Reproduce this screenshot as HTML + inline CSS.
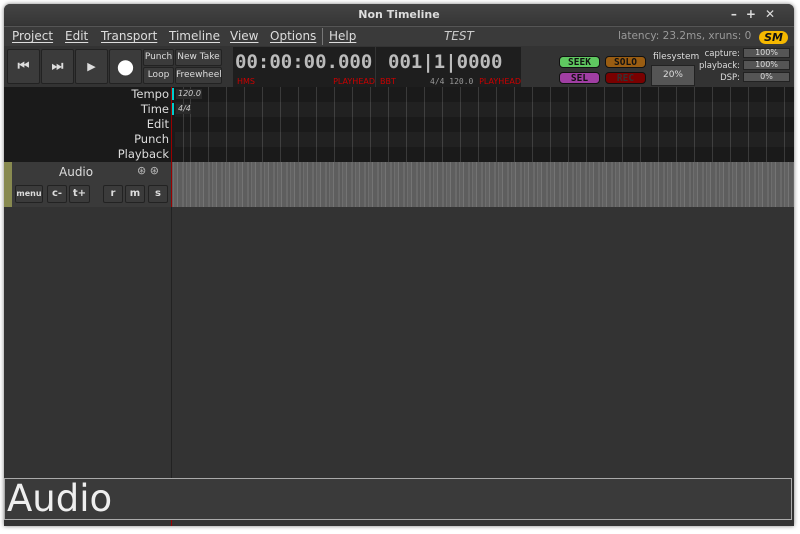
<!DOCTYPE html>
<html><head><style>
*{margin:0;padding:0;box-sizing:border-box}
body{width:800px;height:534px;background:#fff;font-family:"DejaVu Sans","Liberation Sans",sans-serif;position:relative;overflow:hidden}
.win{position:absolute;left:4px;top:4px;width:790px;height:522px;background:#333;border-radius:6px 6px 0 0;box-shadow:0 0 4px rgba(0,0,0,.5);overflow:hidden}
.a{position:absolute;white-space:nowrap}
.title{left:0;top:0;width:790px;height:21px;background:linear-gradient(#444,#363636);color:#ddd;font-weight:bold;font-size:11px;text-align:center;line-height:21px}
.menu{left:0;top:22px;width:790px;height:20px;background:#3a3a3a;border-top:1px solid #555;color:#ddd;font-size:12px;line-height:19px}
.menu span{position:absolute;text-decoration:underline;text-decoration-thickness:1px;text-underline-offset:2px}
.btn{background:#3b3b3b;border:1px solid #222;border-radius:2px;color:#ddd;font-size:9px;text-align:center}
.clk{background:#1e1e1e;color:#bbb;font-family:"DejaVu Sans Mono",monospace}
.red{color:#c00;font-size:8px;font-family:"DejaVu Sans",sans-serif}
.pill{border:1px solid #111;border-radius:4px;font-weight:bold;font-size:9.5px;text-align:center;line-height:11px;font-family:"DejaVu Sans Mono",monospace}
.lbl{color:#ddd;font-size:11.5px;text-align:right;width:165px;left:0}
.grid{background-image:repeating-linear-gradient(90deg,#3a3a3a 0 1px,transparent 1px 18px)}
</style></head><body>
<div class="win">
<div class="a title">Non Timeline<span style="position:absolute;right:10px;top:0;letter-spacing:9px;font-size:12px">–+✕</span></div>
<div class="a menu">
<span style="left:8px">Project</span><span style="left:61px">Edit</span><span style="left:97px">Transport</span><span style="left:165px">Timeline</span><span style="left:226px">View</span><span style="left:266px">Options</span>
<div style="position:absolute;left:318px;top:1px;width:1px;height:17px;background:#777"></div>
<span style="left:325px">Help</span>
<span style="left:440px;text-decoration:none;font-style:italic;color:#ccc">TEST</span>
<span style="left:614px;text-decoration:none;color:#999;font-size:10.5px">latency: 23.2ms, xruns: 0</span>
<div style="position:absolute;left:755px;top:4px;width:29px;height:13px;background:#f5b800;border-radius:7px;color:#111;font-weight:bold;font-style:italic;font-size:11px;line-height:13px;text-align:center">SM</div>
</div>
<div class="a" style="left:0;top:43px;width:790px;height:43px;background:#333"></div>
<div class="a btn" style="left:3px;top:45px;width:33px;height:35px;font-size:13px;line-height:33px;font-weight:bold">⏮</div>
<div class="a btn" style="left:37px;top:45px;width:33px;height:35px;font-size:13px;line-height:33px;font-weight:bold">⏭</div>
<div class="a btn" style="left:71px;top:45px;width:33px;height:35px;font-size:11px;line-height:33px">▶</div>
<div class="a btn" style="left:105px;top:45px;width:33px;height:35px;font-size:20px;line-height:32px;color:#fff">●</div>
<div class="a btn" style="left:139px;top:45px;width:31px;height:17px;line-height:15px">Punch</div>
<div class="a btn" style="left:171px;top:45px;width:47px;height:17px;line-height:15px">New Take</div>
<div class="a btn" style="left:139px;top:63px;width:31px;height:17px;line-height:15px">Loop</div>
<div class="a btn" style="left:171px;top:63px;width:47px;height:17px;line-height:15px">Freewheel</div>
<div class="a clk" style="left:229px;top:43px;width:142px;height:40px"><div style="position:absolute;left:2px;top:4px;font-size:19px;font-weight:bold">00:00:00.000</div><div class="red" style="position:absolute;left:4px;top:30px">HMS</div><div class="red" style="position:absolute;right:0;top:30px">PLAYHEAD</div></div>
<div class="a clk" style="left:372px;top:43px;width:145px;height:40px"><div style="position:absolute;left:12px;top:4px;font-size:19px;font-weight:bold">001|1|0000</div><div class="red" style="position:absolute;left:4px;top:30px">BBT</div><div style="position:absolute;left:54px;top:30px;font-size:8px;color:#999">4/4 120.0</div><div class="red" style="position:absolute;right:0;top:30px">PLAYHEAD</div></div>
<div class="a pill" style="left:555px;top:52px;width:41px;height:12px;background:#5fc760;color:#111">SEEK</div>
<div class="a pill" style="left:601px;top:52px;width:41px;height:12px;background:#9a5d12;color:#111">SOLO</div>
<div class="a pill" style="left:555px;top:68px;width:41px;height:12px;background:#a03ea3;color:#111">SEL</div>
<div class="a pill" style="left:601px;top:68px;width:41px;height:12px;background:#7a0000;color:#333">REC</div>
<div class="a" style="left:649px;top:48px;color:#ddd;font-size:9px">filesystem</div>
<div class="a" style="left:647px;top:61px;width:44px;height:21px;background:#555;border:1px solid #222;color:#ddd;font-size:9px;text-align:center;line-height:19px">20%</div>
<div class="a" style="left:690px;top:44px;width:46px;color:#ddd;font-size:8.5px;text-align:right;line-height:12px">capture:<br>playback:<br>DSP:</div>
<div class="a" style="left:739px;top:44px;width:47px;height:10px;background:#555;border:1px solid #222;color:#ddd;font-size:8px;text-align:center;line-height:8px">100%</div>
<div class="a" style="left:739px;top:56px;width:47px;height:10px;background:#555;border:1px solid #222;color:#ddd;font-size:8px;text-align:center;line-height:8px">100%</div>
<div class="a" style="left:739px;top:68px;width:47px;height:10px;background:#555;border:1px solid #222;color:#ddd;font-size:8px;text-align:center;line-height:8px">0%</div>
<div class="a" style="left:0;top:83px;width:790px;height:75px;background:#1a1a1a"></div>
<div class="a grid" style="left:171px;top:83px;width:619px;height:75px;background-color:#1a1a1a;background-position:15px 0"></div>
<div class="a" style="left:171px;top:98px;width:619px;height:15px;background:rgba(255,255,255,.03)"></div>
<div class="a" style="left:171px;top:128px;width:619px;height:15px;background:rgba(255,255,255,.03)"></div>
<div class="a lbl" style="top:83px">Tempo</div>
<div class="a lbl" style="top:98px">Time</div>
<div class="a lbl" style="top:113px">Edit</div>
<div class="a lbl" style="top:128px">Punch</div>
<div class="a lbl" style="top:143px">Playback</div>
<div class="a" style="left:167px;top:84px;width:3px;height:12px;background:#0cc"></div>
<div class="a" style="left:167px;top:99px;width:3px;height:12px;background:#0cc"></div>
<div class="a" style="left:172px;top:85px;width:26px;height:10px;background:#2a2a2a;color:#ccc;font-size:8px;font-style:italic;line-height:10px;padding-left:2px">120.0</div>
<div class="a" style="left:172px;top:100px;width:15px;height:10px;background:#2a2a2a;color:#ccc;font-size:8px;font-style:italic;line-height:10px;padding-left:2px">4/4</div>
<div class="a" style="left:0;top:158px;width:167px;height:45px;background:#3a3a3a"></div>
<div class="a" style="left:0;top:158px;width:8px;height:45px;background:#888a50"></div>
<div class="a" style="left:55px;top:161px;color:#ddd;font-size:12px">Audio</div>
<div class="a" style="left:133px;top:160px;color:#bbb;font-size:11px">⊛ ⊛</div>
<div class="a btn" style="left:11px;top:181px;width:28px;height:18px;font-size:8px;line-height:16px;font-weight:bold">menu</div>
<div class="a btn" style="left:43px;top:181px;width:20px;height:18px;line-height:16px;font-weight:bold;font-size:10px">c-</div>
<div class="a btn" style="left:65px;top:181px;width:21px;height:18px;line-height:16px;font-weight:bold;font-size:10px">t+</div>
<div class="a btn" style="left:99px;top:181px;width:20px;height:18px;line-height:16px;font-weight:bold;font-size:10px">r</div>
<div class="a btn" style="left:121px;top:181px;width:20px;height:18px;line-height:16px;font-weight:bold;font-size:10px">m</div>
<div class="a btn" style="left:144px;top:181px;width:20px;height:18px;line-height:16px;font-weight:bold;font-size:10px">s</div>
<div class="a" style="left:167px;top:158px;width:623px;height:45px;background:#636363;background-image:repeating-linear-gradient(90deg,#5c5c5c 0 2px,#6e6e6e 2px 3px,#626262 3px 6px,#747474 6px 7px,#5e5e5e 7px 11px,#6a6a6a 11px 13px)"></div>
<div class="a" style="left:167px;top:83px;width:1px;height:440px;background:#900"></div>
<div class="a" style="left:167px;top:203px;width:1px;height:272px;background:#222"></div>
<div class="a" style="left:0;top:474px;width:788px;height:42px;background:#3a3a3a;border:1px solid #aaa;color:#eee;font-size:37px;line-height:40px;padding-left:2px">Audio</div>
</div>
</body></html>
